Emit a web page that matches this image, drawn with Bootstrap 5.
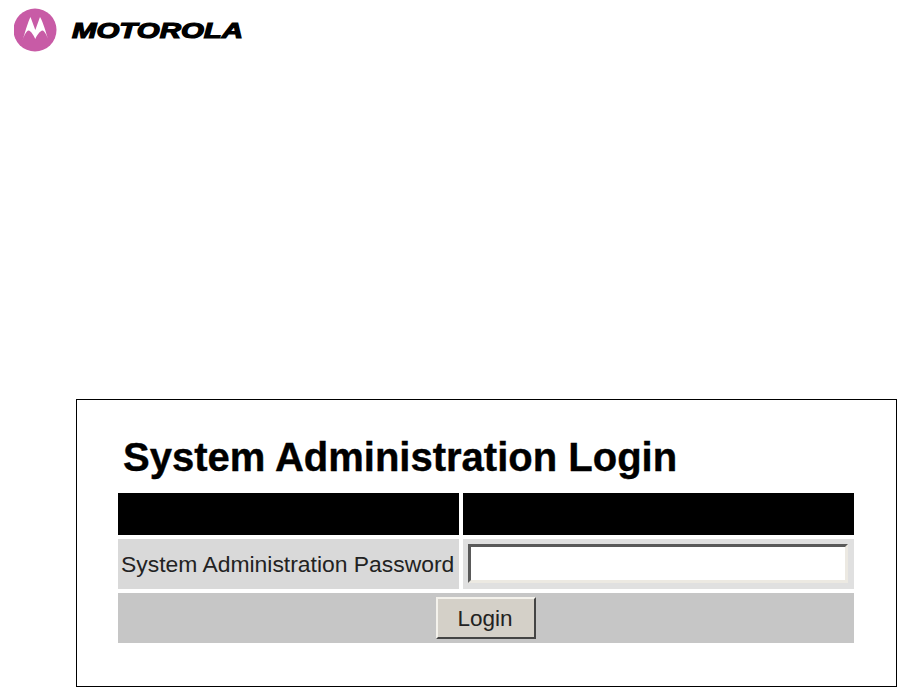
<!DOCTYPE html>
<html lang="en">
<head>
    <meta charset="UTF-8">
    <meta name="viewport" content="width=device-width, initial-scale=1.0">
    <title>System Administration Login</title>
    <link href="https://cdn.jsdelivr.net/npm/bootstrap@5.3.3/dist/css/bootstrap.min.css" rel="stylesheet">
    <style>
        body {
            font-family: "Liberation Sans", Arial, sans-serif;
            background-color: #fff;
            color: #000;
            overflow: hidden;
        }

        .page-head {
            height: 399px;
            padding: 8px 0 0 14px;
        }

        .brand-text {
            font-family: "Liberation Sans", Arial, sans-serif;
            font-weight: 700;
            font-style: italic;
            font-size: 22px;
            stroke: #000;
            stroke-width: 1.2px;
        }

        .login-frame {
            margin-left: 76px;
            width: 821px;
            height: 288px;
            border: 1px solid #000;
            padding: 32px 0 0 41px;
        }

        .login-title {
            font-size: 40px;
            font-weight: 700;
            line-height: 50px;
            margin: 0 0 11px 5px;
            -webkit-text-stroke: 0.4px #000;
        }

        .login-grid {
            display: grid;
            grid-template-columns: 341px 391px;
            grid-template-rows: 42px 50px 50px;
            gap: 4px;
            width: 736px;
        }

        .head-cell {
            background-color: #000;
        }

        .label-cell {
            background-color: #d9d9d9;
            font-size: 22.9px;
            color: #222;
            padding: 1px 0 0 3px;
        }

        .input-cell {
            background-color: #e0e0e0;
            padding: 5px 6px 6px 5px;
        }

        .pass-input {
            display: block;
            width: 100%;
            height: 100%;
            background: #fff;
            border: 3px solid;
            border-color: #5a5a5a #ece9e2 #ece9e2 #5a5a5a;
            border-radius: 0;
            outline: none;
        }

        .action-cell {
            grid-column: 1 / 3;
            background-color: #c6c6c6;
        }

        .login-btn {
            width: 100px;
            height: 42px;
            padding: 1px 2px 0 0;
            font-size: 22.5px;
            color: #222;
            background-color: #d4d0c8;
            border: 2px solid;
            border-color: #f4f2ec #444 #444 #f4f2ec;
            border-radius: 0;
        }
    </style>
</head>
<body>
    <div class="page-head">
        <svg width="232" height="46" viewBox="0 0 232 46" role="img" aria-label="Motorola">
            <circle cx="21" cy="22" r="21.5" fill="#c85ba6"/>
            <path d="M8.5 33 C11 24 14 14 16.5 9 L21.3 22 L26 9 C29 14 32 24 34.5 33 C33 27 30.5 23 28.5 22.5 C26 23 23 27 21.3 31 C19.5 27 17 23 14.5 22.5 C12.5 23 10 27 8.5 33 Z" fill="#fff"/>
            <text class="brand-text" x="58" y="30" textLength="171" lengthAdjust="spacingAndGlyphs">MOTOROLA</text>
        </svg>
    </div>

    <div class="login-frame">
        <h1 class="login-title">System Administration Login</h1>
        <form class="login-grid">
            <div class="head-cell"></div>
            <div class="head-cell"></div>
            <label class="label-cell d-flex align-items-center" for="password">System Administration Password</label>
            <div class="input-cell">
                <input class="pass-input" type="password" id="password">
            </div>
            <div class="action-cell d-flex justify-content-center align-items-center">
                <button type="button" class="login-btn">Login</button>
            </div>
        </form>
    </div>

    <script src="https://cdn.jsdelivr.net/npm/bootstrap@5.3.3/dist/js/bootstrap.bundle.min.js"></script>
</body>
</html>
